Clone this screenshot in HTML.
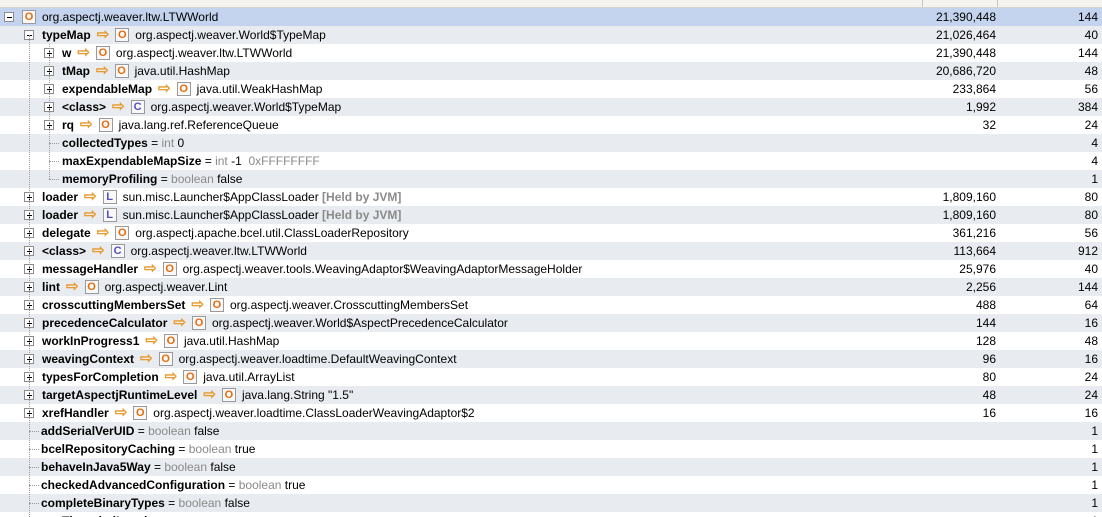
<!DOCTYPE html>
<html><head><meta charset="utf-8"><style>
html,body{margin:0;width:1102px;height:517px;overflow:hidden}
body{background:#fff;font-family:Tahoma,"Liberation Sans",sans-serif;font-size:12px;color:#000;position:relative}
.hdr{position:absolute;left:0;top:0;width:1102px;height:7px;background:#f4f3ee;border-bottom:1px solid #d5d5d5}
.hdr i{position:absolute;top:0;width:1px;height:7px;background:#c8c8c8}
.r{position:absolute;left:0;width:1102px;height:18px;line-height:18px;white-space:nowrap;overflow:hidden}
.g{background:#e8ebef}
.sel{background:#c4d4ee}
.n{position:absolute;top:0;display:flex;align-items:center;height:18px}
.rv{position:absolute;right:106px;top:0}
.sv{position:absolute;right:4px;top:0}
.b{font-weight:bold}
.gr{color:#8a8a8a}
.ex{position:absolute;top:4px;width:8px;height:8px;border:1px solid #8c8c8c;background:#fff;font-size:0}
.ex:before{content:"";position:absolute;left:2px;top:4px;width:5px;height:1px;background:#000}
.ex.p:after{content:"";position:absolute;left:4px;top:2px;width:1px;height:5px;background:#000}
.ic{display:inline-block;width:12px;height:12px;border:1px solid #9a9a9a;background:#f8f8f8;font-size:11px;line-height:12px;text-align:center;font-weight:bold;margin:0 6px 0 0;font-family:"Liberation Sans",sans-serif}
.o{color:#e46c0a}.l{color:#5050c0}.c{color:#5050c0}
.ar{color:#e89a2c;font-weight:bold;margin:0 6px 0 6px;font-size:15px;line-height:18px}
.dl{position:absolute;border-left:1px dotted #9a9a9a;width:0}
.dh{position:absolute;top:9px;border-top:1px dotted #9a9a9a;height:0}
</style></head><body>
<div class="hdr"><i style="left:922px"></i><i style="left:997px"></i></div>

<div class="r sel" style="top:8px"><span class="ex" style="left:4px"></span><div class="n" style="left:22px"><span class="ic o">O</span>org.aspectj.weaver.ltw.LTWWorld</div><span class="rv">21,390,448</span><span class="sv">144</span></div>
<div class="r g" style="top:26px"><span class="ex" style="left:24px"></span><div class="n" style="left:42px"><span class="b">typeMap</span><span class="ar">⇨</span><span class="ic o">O</span>org.aspectj.weaver.World$TypeMap</div><span class="rv">21,026,464</span><span class="sv">40</span></div>
<div class="r" style="top:44px"><span class="ex p" style="left:44px"></span><div class="n" style="left:62px"><span class="b">w</span><span class="ar">⇨</span><span class="ic o">O</span>org.aspectj.weaver.ltw.LTWWorld</div><span class="rv">21,390,448</span><span class="sv">144</span></div>
<div class="r g" style="top:62px"><span class="ex p" style="left:44px"></span><div class="n" style="left:62px"><span class="b">tMap</span><span class="ar">⇨</span><span class="ic o">O</span>java.util.HashMap</div><span class="rv">20,686,720</span><span class="sv">48</span></div>
<div class="r" style="top:80px"><span class="ex p" style="left:44px"></span><div class="n" style="left:62px"><span class="b">expendableMap</span><span class="ar">⇨</span><span class="ic o">O</span>java.util.WeakHashMap</div><span class="rv">233,864</span><span class="sv">56</span></div>
<div class="r g" style="top:98px"><span class="ex p" style="left:44px"></span><div class="n" style="left:62px"><span class="b">&lt;class&gt;</span><span class="ar">⇨</span><span class="ic c">C</span>org.aspectj.weaver.World$TypeMap</div><span class="rv">1,992</span><span class="sv">384</span></div>
<div class="r" style="top:116px"><span class="ex p" style="left:44px"></span><div class="n" style="left:62px"><span class="b">rq</span><span class="ar">⇨</span><span class="ic o">O</span>java.lang.ref.ReferenceQueue</div><span class="rv">32</span><span class="sv">24</span></div>
<div class="r g" style="top:134px"><span class="dh" style="left:49px;width:10px"></span><div class="n" style="left:62px"><span class="b">collectedTypes</span>&nbsp;=&nbsp;<span class="gr">int</span>&nbsp;0</div><span class="sv">4</span></div>
<div class="r" style="top:152px"><span class="dh" style="left:49px;width:10px"></span><div class="n" style="left:62px"><span class="b">maxExpendableMapSize</span>&nbsp;=&nbsp;<span class="gr">int</span>&nbsp;-1&nbsp;&nbsp;<span class="gr">0xFFFFFFFF</span></div><span class="sv">4</span></div>
<div class="r g" style="top:170px"><span class="dh" style="left:49px;width:10px"></span><div class="n" style="left:62px"><span class="b">memoryProfiling</span>&nbsp;=&nbsp;<span class="gr">boolean</span>&nbsp;false</div><span class="sv">1</span></div>
<div class="r" style="top:188px"><span class="ex p" style="left:24px"></span><div class="n" style="left:42px"><span class="b">loader</span><span class="ar">⇨</span><span class="ic l">L</span>sun.misc.Launcher$AppClassLoader&nbsp;<span class="gr b">[Held by JVM]</span></div><span class="rv">1,809,160</span><span class="sv">80</span></div>
<div class="r g" style="top:206px"><span class="ex p" style="left:24px"></span><div class="n" style="left:42px"><span class="b">loader</span><span class="ar">⇨</span><span class="ic l">L</span>sun.misc.Launcher$AppClassLoader&nbsp;<span class="gr b">[Held by JVM]</span></div><span class="rv">1,809,160</span><span class="sv">80</span></div>
<div class="r" style="top:224px"><span class="ex p" style="left:24px"></span><div class="n" style="left:42px"><span class="b">delegate</span><span class="ar">⇨</span><span class="ic o">O</span>org.aspectj.apache.bcel.util.ClassLoaderRepository</div><span class="rv">361,216</span><span class="sv">56</span></div>
<div class="r g" style="top:242px"><span class="ex p" style="left:24px"></span><div class="n" style="left:42px"><span class="b">&lt;class&gt;</span><span class="ar">⇨</span><span class="ic c">C</span>org.aspectj.weaver.ltw.LTWWorld</div><span class="rv">113,664</span><span class="sv">912</span></div>
<div class="r" style="top:260px"><span class="ex p" style="left:24px"></span><div class="n" style="left:42px"><span class="b">messageHandler</span><span class="ar">⇨</span><span class="ic o">O</span>org.aspectj.weaver.tools.WeavingAdaptor$WeavingAdaptorMessageHolder</div><span class="rv">25,976</span><span class="sv">40</span></div>
<div class="r g" style="top:278px"><span class="ex p" style="left:24px"></span><div class="n" style="left:42px"><span class="b">lint</span><span class="ar">⇨</span><span class="ic o">O</span>org.aspectj.weaver.Lint</div><span class="rv">2,256</span><span class="sv">144</span></div>
<div class="r" style="top:296px"><span class="ex p" style="left:24px"></span><div class="n" style="left:42px"><span class="b">crosscuttingMembersSet</span><span class="ar">⇨</span><span class="ic o">O</span>org.aspectj.weaver.CrosscuttingMembersSet</div><span class="rv">488</span><span class="sv">64</span></div>
<div class="r g" style="top:314px"><span class="ex p" style="left:24px"></span><div class="n" style="left:42px"><span class="b">precedenceCalculator</span><span class="ar">⇨</span><span class="ic o">O</span>org.aspectj.weaver.World$AspectPrecedenceCalculator</div><span class="rv">144</span><span class="sv">16</span></div>
<div class="r" style="top:332px"><span class="ex p" style="left:24px"></span><div class="n" style="left:42px"><span class="b">workInProgress1</span><span class="ar">⇨</span><span class="ic o">O</span>java.util.HashMap</div><span class="rv">128</span><span class="sv">48</span></div>
<div class="r g" style="top:350px"><span class="ex p" style="left:24px"></span><div class="n" style="left:42px"><span class="b">weavingContext</span><span class="ar">⇨</span><span class="ic o">O</span>org.aspectj.weaver.loadtime.DefaultWeavingContext</div><span class="rv">96</span><span class="sv">16</span></div>
<div class="r" style="top:368px"><span class="ex p" style="left:24px"></span><div class="n" style="left:42px"><span class="b">typesForCompletion</span><span class="ar">⇨</span><span class="ic o">O</span>java.util.ArrayList</div><span class="rv">80</span><span class="sv">24</span></div>
<div class="r g" style="top:386px"><span class="ex p" style="left:24px"></span><div class="n" style="left:42px"><span class="b">targetAspectjRuntimeLevel</span><span class="ar">⇨</span><span class="ic o">O</span>java.lang.String "1.5"</div><span class="rv">48</span><span class="sv">24</span></div>
<div class="r" style="top:404px"><span class="ex p" style="left:24px"></span><div class="n" style="left:42px"><span class="b">xrefHandler</span><span class="ar">⇨</span><span class="ic o">O</span>org.aspectj.weaver.loadtime.ClassLoaderWeavingAdaptor$2</div><span class="rv">16</span><span class="sv">16</span></div>
<div class="r g" style="top:422px"><span class="dh" style="left:29px;width:10px"></span><div class="n" style="left:41px"><span class="b">addSerialVerUID</span>&nbsp;=&nbsp;<span class="gr">boolean</span>&nbsp;false</div><span class="sv">1</span></div>
<div class="r" style="top:440px"><span class="dh" style="left:29px;width:10px"></span><div class="n" style="left:41px"><span class="b">bcelRepositoryCaching</span>&nbsp;=&nbsp;<span class="gr">boolean</span>&nbsp;true</div><span class="sv">1</span></div>
<div class="r g" style="top:458px"><span class="dh" style="left:29px;width:10px"></span><div class="n" style="left:41px"><span class="b">behaveInJava5Way</span>&nbsp;=&nbsp;<span class="gr">boolean</span>&nbsp;false</div><span class="sv">1</span></div>
<div class="r" style="top:476px"><span class="dh" style="left:29px;width:10px"></span><div class="n" style="left:41px"><span class="b">checkedAdvancedConfiguration</span>&nbsp;=&nbsp;<span class="gr">boolean</span>&nbsp;true</div><span class="sv">1</span></div>
<div class="r g" style="top:494px"><span class="dh" style="left:29px;width:10px"></span><div class="n" style="left:41px"><span class="b">completeBinaryTypes</span>&nbsp;=&nbsp;<span class="gr">boolean</span>&nbsp;false</div><span class="sv">1</span></div>
<div class="r" style="top:512px;height:5px"><div class="n" style="left:62px"><span class="b">ThreadedLocal</span></div><span class="sv">1</span></div>

<span class="dl" style="left:29px;top:35px;height:482px"></span>
<span class="dl" style="left:49px;top:44px;height:135px"></span>
</body></html>
